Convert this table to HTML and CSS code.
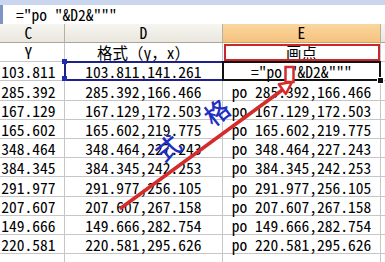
FILE: index.html
```html
<!DOCTYPE html>
<html>
<head>
<meta charset="utf-8">
<link rel="stylesheet" href="styles.css">
</head>
<body>
<div class="topband"></div>
<div class="fbar"><span class="fx-edge"></span><span class="ftext">="po "&amp;D2&amp;"""</span></div>
<div class="sheet">
  <div class="hd">C</div><div class="hd">D</div><div class="hd hd-sel">E</div><div class="hd"></div>
  <div class="c">Y</div><div class="c">格式（y，x）</div><div class="c e2">画点</div><div class="c"></div>
  <div class="c">103.811</div><div class="c d3">103.811,141.261</div><div class="c e3">="po "&amp;D2&amp;"""</div><div class="c"></div>
  <div class="c">285.392</div><div class="c">285.392,166.466</div><div class="c">po 285.392,166.466</div><div class="c"></div>
  <div class="c">167.129</div><div class="c">167.129,172.503</div><div class="c">po 167.129,172.503</div><div class="c"></div>
  <div class="c">165.602</div><div class="c">165.602,219.775</div><div class="c">po 165.602,219.775</div><div class="c"></div>
  <div class="c">348.464</div><div class="c">348.464,227.243</div><div class="c">po 348.464,227.243</div><div class="c"></div>
  <div class="c">384.345</div><div class="c">384.345,242.253</div><div class="c">po 384.345,242.253</div><div class="c"></div>
  <div class="c">291.977</div><div class="c">291.977,256.105</div><div class="c">po 291.977,256.105</div><div class="c"></div>
  <div class="c">207.607</div><div class="c">207.607,267.158</div><div class="c">po 207.607,267.158</div><div class="c"></div>
  <div class="c">149.666</div><div class="c">149.666,282.754</div><div class="c">po 149.666,282.754</div><div class="c"></div>
  <div class="c">220.581</div><div class="c">220.581,295.626</div><div class="c">po 220.581,295.626</div><div class="c"></div>
  <div class="c"></div><div class="c"></div><div class="c"></div><div class="c"></div>
</div>
<svg class="annot" width="385" height="262" viewBox="0 0 385 262">
  <line x1="121" y1="208" x2="283" y2="89.5" stroke="#d42b2b" stroke-width="3.5" stroke-linecap="round"/>
  <polygon points="292,82 278.8,84.2 285.8,94" fill="#fff" stroke="#d42b2b" stroke-width="2.5" stroke-linejoin="round"/>
  <rect x="285.5" y="67" width="8" height="15" fill="#fff" stroke="#d42b2b" stroke-width="2.5"/>
</svg>
<span class="hw hw1">式</span>
<span class="hw hw2">格</span>
</body>
</html>
```
FILE: styles.css
```css
html, body {
  margin: 0;
  padding: 0;
  width: 385px;
  height: 262px;
  overflow: hidden;
  background: #fff;
}
body {
  position: relative;
  font-family: "Noto Sans Mono CJK SC", "Noto Sans CJK SC", monospace;
  font-size: 15.5px;
  color: #000;
}
.topband {
  height: 5px;
  background: #c9d6ee;
}
.fbar {
  height: 19px;
  display: flex;
  align-items: flex-end;
  background: #fff;
}
.fx-edge {
  width: 3px;
  height: 19px;
  background: #7d95c4;
}
.ftext {
  margin-left: 13px;
  line-height: 19px;
  white-space: pre;
}
.sheet {
  display: grid;
  grid-template-columns: 72px 158px 158px 30px;
  grid-template-rows: 19px;
  grid-auto-rows: 19.2px;
  margin-left: -7px;
}
.hd, .c {
  box-sizing: border-box;
  display: flex;
  align-items: flex-end;
  justify-content: center;
  white-space: pre;
  line-height: 17px;
  overflow: visible;
}
.hd {
  background: linear-gradient(#f6f5f0, #e9e7de);
  border-right: 1px solid #b4b1a3;
  border-bottom: 1px solid #a9a697;
  padding-bottom: 1px;
}
.hd-sel {
  background: linear-gradient(#fad7a0, #f6c27e);
  border-bottom-color: #d9a35e;
}
.c {
  border-right: 1px solid #c6c6c6;
  border-bottom: 1px solid #c6c6c6;
  padding-bottom: 0;
}
.e2, .d3, .e3 {
  position: relative;
}
.e2::after {
  content: "";
  position: absolute;
  left: 1px; top: 1px; right: 0; bottom: 0;
  border: 2.5px solid #c8282c;
}
.d3::after {
  content: "";
  position: absolute;
  left: -1px; top: -1px; right: -1px; bottom: -1px;
  border-top: 2px solid #20208a;
  border-bottom: 2px solid #20208a;
  border-left: 2px solid #20208a;
}
.d3::before {
  content: "";
  position: absolute;
  left: -3px; top: -3px;
  width: 5px; height: 22px;
  background:
    linear-gradient(#1d2fb0, #1d2fb0) top left / 5px 5px no-repeat,
    linear-gradient(#1d2fb0, #1d2fb0) bottom left / 5px 5px no-repeat;
  z-index: 2;
}
.e3::after {
  content: "";
  position: absolute;
  left: -1px; top: -1px; right: -1px; bottom: -1px;
  border: 2px solid #111;
}
.e3::before {
  content: "";
  position: absolute;
  right: -4px; bottom: -4px;
  width: 5px; height: 5px;
  background: #111;
  border: 1px solid #fff;
  z-index: 2;
}
.annot {
  position: absolute;
  left: 0;
  top: 0;
}
.hw {
  position: absolute;
  font-family: "Noto Sans CJK SC", sans-serif;
  font-size: 25px;
  font-weight: 500;
  line-height: 25px;
  color: #1f2fc4;
  transform: rotate(-38deg);
}
.hw1 { left: 155px; top: 135px; }
.hw2 { left: 204px; top: 99px; }
```
